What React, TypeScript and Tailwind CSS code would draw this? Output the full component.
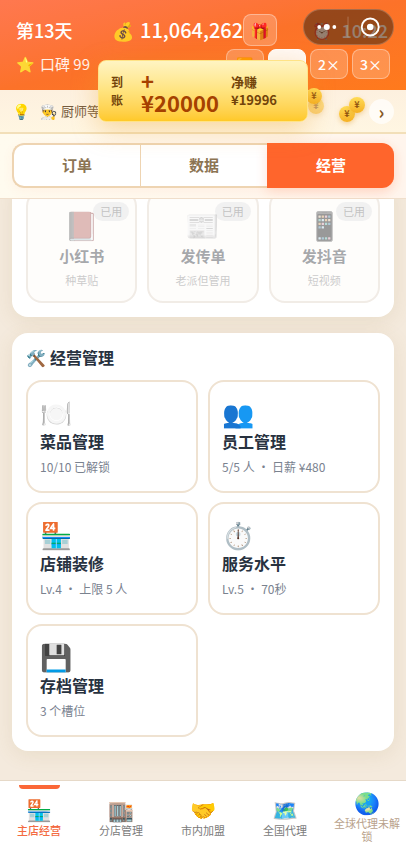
import { useState } from "react";
import clsx from "clsx";

const tabs = ["订单", "数据", "经营"];

const promos = [
  { icon: "📕", name: "小红书", desc: "种草贴" },
  { icon: "📰", name: "发传单", desc: "老派但管用" },
  { icon: "📱", name: "发抖音", desc: "短视频" },
];

const manageItems = [
  { icon: "🍽️", name: "菜品管理", desc: "10/10 已解锁" },
  { icon: "👥", name: "员工管理", desc: "5/5 人 ・ 日薪 ¥480" },
  { icon: "🏪", name: "店铺装修", desc: "Lv.4 ・ 上限 5 人" },
  { icon: "⏱️", name: "服务水平", desc: "Lv.5 ・ 70秒" },
  { icon: "💾", name: "存档管理", desc: "3 个槽位" },
];

const navItems = [
  { icon: "🏪", label: "主店经营" },
  { icon: "🏬", label: "分店管理" },
  { icon: "🤝", label: "市内加盟" },
  { icon: "🗺️", label: "全国代理" },
  { icon: "🌏", label: "全球代理未解锁", locked: true },
];

function Coin({ className }: { className: string }) {
  return (
    <span
      className={clsx(
        "absolute flex h-4 w-4 items-center justify-center rounded-full bg-linear-to-b from-[#ffdc55] to-[#f5b021] text-[9px] leading-3 font-bold text-[#8f5310] shadow-[0_2px_5px_rgba(220,150,30,0.35)]",
        className
      )}
    >
      ¥
    </span>
  );
}

function Header() {
  const [speed, setSpeed] = useState("1×");

  return (
    <header className="h-[90px] shrink-0 bg-linear-to-br from-[#ff784f] via-[#fc7229] to-[#ff7a1c] px-4 pt-[14px] text-white">
      <div className="flex h-8 items-center">
        <span className="w-24 text-[18px] font-medium">第13天</span>
        <span className="w-7 text-[18px]">💰</span>
        <span className="text-[20px] font-medium">11,064,262</span>
        <button
          aria-label="礼物"
          className="flex h-8 w-[34px] shrink-0 items-center justify-center rounded-lg border border-white/35 bg-white/20 text-[16px]"
        >
          🎁
        </button>
        {/* Capsule menu over the clock */}
        <div className="relative ml-auto flex h-9 w-[90px] shrink-0 items-center">
          <span className="flex w-full items-center justify-between pr-0.5 pl-3 text-[18px] font-medium text-white">
            <span className="text-[16px]">⏰</span>
            <span>10:22</span>
          </span>
          <button
            aria-label="更多"
            className="absolute -top-[3px] -right-1 flex h-9 w-[91px] items-center rounded-full border border-white/20 bg-[#522c10]/60"
          >
            <svg viewBox="0 0 90 36" className="h-full w-full" fill="none">
              <circle cx="14" cy="18" r="2" fill="#fff" />
              <circle cx="22" cy="18" r="3.2" fill="#fff" />
              <circle cx="30" cy="18" r="2" fill="#fff" />
              <path d="M44.500 7v22" stroke="#fff" strokeOpacity=".25" />
              <circle cx="68" cy="18" r="9" stroke="#fff" strokeWidth="2" />
              <circle cx="68" cy="18" r="3.500" fill="#fff" />
            </svg>
          </button>
        </div>
      </div>
      <div className="mt-0.5 flex h-8 items-center">
        <span className="w-6 text-[15px]">⭐</span>
        <span className="text-[15px] text-white/90">口碑 99</span>
        <div className="ml-auto flex gap-1">
          {["⏸️", "1×", "2×", "3×"].map((s) => (
            <button
              key={s}
              onClick={() => setSpeed(s)}
              className={clsx(
                "h-[30px] w-[38px] rounded-lg border text-[14px] font-medium",
                s === speed
                  ? "border-white bg-[#fff8f4] text-[#f4632c]"
                  : "border-white/35 bg-white/20 text-white"
              )}
            >
              {s}
            </button>
          ))}
        </div>
      </div>
    </header>
  );
}

function Toast() {
  return (
    <div
      role="status"
      className="absolute top-[60px] left-1/2 z-10 flex h-[62px] w-[210px] -translate-x-1/2 items-center rounded-lg border border-[#ffe386] bg-linear-to-b from-[#fff4c2] via-[#ffe37d] to-[#ffc927] px-3 font-bold text-[#73440a] shadow-[0_8px_26px_rgba(235,160,40,0.35)]"
    >
      <span className="mr-4 w-3.5 text-[12px] leading-[18px]">到账</span>
      <span className="w-[90px] text-[22px] leading-[22px] text-[#a54100]">+ ¥20000</span>
      <span className="w-14 text-[13px] leading-[18px]">净赚 ¥19996</span>
    </div>
  );
}

export default function App() {
  const [tab, setTab] = useState("经营");
  const [page, setPage] = useState("主店经营");

  return (
    <div className="relative flex h-screen flex-col overflow-hidden bg-[#f4eadd] font-['Noto_Sans_CJK_SC','Noto_Color_Emoji',sans-serif] text-[#28323f]">
      <Header />
      <Toast />

      {/* Tip bar */}
      <div className="relative flex h-11 shrink-0 items-center border-b-2 border-[#f2dfb9] bg-linear-to-b from-[#fdf0df] to-[#fff6e2] px-3">
        <span className="w-7 text-[15px]">💡</span>
        <span className="w-[21px] text-[14px]">👨‍🍳</span>
        <span className="text-[13px] text-[#765c3f]">厨师等</span>
        <Coin className="top-2 left-[308px] opacity-60" />
        <Coin className="-top-0.5 left-[306px]" />
        <Coin className="top-[16px] left-[339px]" />
        <Coin className="top-[7px] left-[349px]" />
        <button
          aria-label="下一条"
          className="ml-auto flex h-[25px] w-[25px] items-center justify-center rounded-full bg-white/70 text-[18px] leading-5 font-bold text-[#85571e]"
        >
          ›
        </button>
      </div>

      <div className="shrink-0 border-b border-[#f0dfcc] bg-linear-to-r from-[#fffbef] to-[#fff5ed] px-3 pt-[9px] pb-[10px]">
        <div role="tablist" className="flex h-[45px] rounded-xl bg-white shadow-[0_3px_12px_rgba(255,110,60,0.06)]">
          {tabs.map((t) => (
            <button
              key={t}
              role="tab"
              aria-selected={t === tab}
              onClick={() => setTab(t)}
              className={clsx(
                "flex-1 border-y-2 border-l text-[15px] font-bold first:rounded-l-xl first:border-l-2 last:rounded-r-xl",
                t === tab
                  ? "border-[#ff652c] bg-[#ff652c] text-white shadow-[0_4px_12px_rgba(255,100,44,0.18)]"
                  : "border-[#eed4b2] text-[#8c7453] last:border-r-2"
              )}
            >
              {t}
            </button>
          ))}
        </div>
      </div>

      <main className="flex min-h-0 flex-1 flex-col justify-end gap-4 overflow-hidden px-3 pb-[29px]">
        <section className="rounded-2xl bg-white p-3.5 shadow-[0_4px_20px_rgba(160,120,60,0.12)]">
          <div className="grid grid-cols-3 gap-2.5">
            {promos.map((p) => (
              <button
                key={p.name}
                disabled
                className="relative rounded-2xl border-2 border-[#e3d8cd] bg-[#fdfaf7] pt-3.5 pb-[13px] text-center opacity-50"
              >
                <span className="absolute top-2.5 right-1.5 rounded-full bg-[#e3e3e3] px-[7px] text-[11px] leading-[19px] text-[#858585]">
                  已用
                </span>
                <span className="block h-10 font-['Noto_Color_Emoji'] text-[28px] leading-[42px] opacity-80 grayscale-50">
                  {p.icon}
                </span>
                <span className="block text-[15px] leading-5 font-bold text-[#4c5057]">{p.name}</span>
                <span className="mt-1.5 block text-[11px] leading-4 text-[#969696]">{p.desc}</span>
              </button>
            ))}
          </div>
        </section>

        <section className="rounded-2xl bg-white p-3.5 shadow-[0_4px_20px_rgba(160,120,60,0.12)]">
          <h2 className="mb-[13px] text-[16px] leading-5 font-bold">
            <span className="inline-block w-6 align-top">🛠️</span>
            经营管理
          </h2>
          <div className="grid grid-cols-2 gap-x-2.5 gap-y-[9px]">
            {manageItems.map((item) => (
              <button
                key={item.name}
                className="rounded-2xl border-2 border-[#efe2d1] bg-white px-3 pt-[13px] pb-3.5 text-left"
              >
                <span className="block h-9 font-['Noto_Color_Emoji'] text-[26px] leading-[38px]">{item.icon}</span>
                <span className="block text-[16px] leading-5 font-bold">{item.name}</span>
                <span className="mt-1.5 block text-[12px] leading-5 text-[#7a828f]">{item.desc}</span>
              </button>
            ))}
          </div>
        </section>
      </main>

      <nav className="-mx-0.5 grid h-[75px] shrink-0 grid-cols-5 border-t border-[#e6d9c8] bg-white">
        {navItems.map((item) => (
          <button
            key={item.label}
            onClick={() => setPage(item.label)}
            className={clsx(
              "relative flex flex-col items-center justify-center px-[5px] pb-0.5 text-[11px] leading-[13px]",
              item.label === page
                ? "font-medium text-[#f36b42]"
                : item.locked
                ? "text-[#b9a28c]"
                : "text-[#7b7b7b]"
            )}
          >
            {item.label === page && (
              <span className="absolute top-1 h-1 w-[41px] rounded-b bg-[#fb6737]" />
            )}
            <span className="h-[26px] font-['Noto_Color_Emoji'] text-[21px] leading-[26px]">{item.icon}</span>
            <span>{item.label}</span>
          </button>
        ))}
      </nav>
    </div>
  );
}
